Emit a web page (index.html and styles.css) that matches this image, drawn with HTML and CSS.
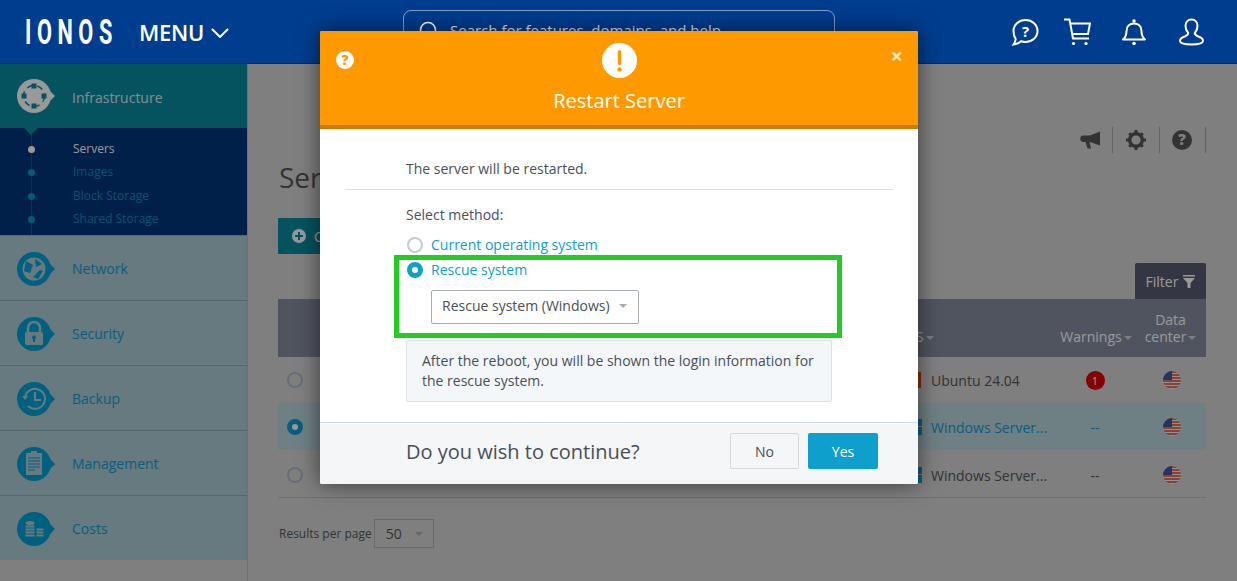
FILE: index.html
```html
<!DOCTYPE html>
<html lang="en">
<head>
<meta charset="utf-8">
<title>Restart Server</title>
<link rel="stylesheet" href="styles.css">
</head>
<body>
<header class="topbar">
  <div class="brand"><span class="logo">IONOS</span></div>
  <div class="menu">MENU
    <svg class="menu-chev" width="18" height="10" viewBox="0 0 18 10"><path d="M1 1l8 8 8-8" fill="none" stroke="#fff" stroke-width="2"/></svg>
  </div>
  <div class="search">
    <svg width="22" height="22" viewBox="0 0 22 22"><circle cx="10" cy="10" r="7.5" fill="none" stroke="#fff" stroke-width="1.6"/><path d="M15.500 15.500l5 5" stroke="#fff" stroke-width="1.6"/></svg>
    <span>Search for features, domains, and help</span>
  </div>
  <div class="top-icons">
    <svg class="ti-chat" width="28" height="28" viewBox="0 0 28 28"><path d="M14.500 2c6.800 0 12 4.900 12 11s-5.200 11-12 11c-1.600 0-3.100-.3-4.500-.8-1.900 1.700-4.300 3-7.500 3.300 1.300-1.800 2-3.500 2.200-5.500C3.300 18.900 2.500 16.100 2.500 13c0-6.100 5.200-11 12-11z" fill="none" stroke="#fff" stroke-width="2"/><text x="14.500" y="18.500" class="chat-q">?</text></svg>
    <svg width="28" height="28" viewBox="0 0 28 28"><path d="M1 1.500h5.500l3.500 19h16M7 5.500h20l-2 10.500H8.800" fill="none" stroke="#fff" stroke-width="2"/><circle cx="10.500" cy="25.500" r="1.600" fill="#fff"/><circle cx="23" cy="25.500" r="1.600" fill="#fff"/></svg>
    <svg class="ti-bell" width="26" height="28" viewBox="0 0 26 28"><path d="M2 21.500c2.500-2 3.500-4 3.500-8.500 0-4.500 3-7.500 7.500-7.500s7.500 3 7.500 7.500c0 4.500 1 6.500 3.500 8.500z" fill="none" stroke="#fff" stroke-width="2" stroke-linejoin="round"/><circle cx="13" cy="3" r="1.800" fill="#fff"/><circle cx="13" cy="25.500" r="1.800" fill="#fff"/></svg>
    <svg width="25" height="28" viewBox="0 0 25 28"><path d="M12.500 1.500c3.700 0 6 2.800 6 6.500 0 3-1.200 5.400-2.700 7 0 2 1 2.500 3.500 3.500 2.700 1 4.700 2.200 4.700 4.300 0 2.600-5 3.700-11.500 3.700S1 25.400 1 22.800c0-2.100 2-3.300 4.700-4.300 2.500-1 3.500-1.500 3.500-3.500-1.500-1.600-2.700-4-2.700-7 0-3.700 2.300-6.500 6-6.500z" fill="none" stroke="#fff" stroke-width="2"/></svg>
  </div>
</header>

<div class="page">
  <aside class="sidebar">
    <div class="nav-item nav-active">
      <svg class="nav-icon" width="38" height="34" viewBox="0 0 38 34"><path d="M33 12l5 5-5 5z" fill="#ffffff"/><circle cx="17" cy="17" r="17" fill="#ffffff"/><circle cx="17" cy="17" r="10.500" fill="none" stroke="#088a9e" stroke-width="1.500" stroke-dasharray="6 4.500"/><rect x="14.500" y="4.500" width="5" height="5" fill="#088a9e"/><rect x="14.500" y="24.500" width="5" height="5" fill="#088a9e"/><rect x="4.500" y="14.500" width="5" height="5" fill="#088a9e"/><rect x="24.500" y="14.500" width="5" height="5" fill="#088a9e"/></svg>
      <span>Infrastructure</span>
    </div>
    <ul class="subnav">
      <li class="sub-current">Servers</li>
      <li>Images</li>
      <li>Block Storage</li>
      <li>Shared Storage</li>
    </ul>
    <div class="nav-item">
      <svg class="nav-icon" width="38" height="34" viewBox="0 0 38 34"><path d="M33 12l5 5-5 5z" fill="#00a0d4"/><circle cx="17" cy="17" r="17" fill="#00a0d4"/><circle cx="17" cy="17" r="11.500" fill="#aacbd4"/><path d="M9 9l7 4-3 8-6-2zM18 7l7 5-6 3zM16 25l7-7 3 1-5 8zM8 22l4 5" fill="#00a0d4"/></svg>
      <span>Network</span>
    </div>
    <div class="nav-item">
      <svg class="nav-icon" width="38" height="34" viewBox="0 0 38 34"><path d="M33 12l5 5-5 5z" fill="#00a0d4"/><circle cx="17" cy="17" r="17" fill="#00a0d4"/><path d="M11 15v-4a6 6 0 0 1 12 0v4" fill="none" stroke="#aacbd4" stroke-width="2.500"/><rect x="8" y="15" width="18" height="13" rx="1.500" fill="#aacbd4"/><circle cx="17" cy="20.500" r="2" fill="#00a0d4"/><rect x="16" y="21" width="2" height="4" fill="#00a0d4"/></svg>
      <span>Security</span>
    </div>
    <div class="nav-item">
      <svg class="nav-icon" width="38" height="34" viewBox="0 0 38 34"><path d="M33 12l5 5-5 5z" fill="#00a0d4"/><circle cx="17" cy="17" r="17" fill="#00a0d4"/><path d="M8 17a10 10 0 1 1 3 7" fill="none" stroke="#aacbd4" stroke-width="2"/><path d="M5 14l3 4 3-4z" fill="#aacbd4"/><path d="M18 10v8h6" fill="none" stroke="#aacbd4" stroke-width="2"/></svg>
      <span>Backup</span>
    </div>
    <div class="nav-item">
      <svg class="nav-icon" width="38" height="34" viewBox="0 0 38 34"><path d="M33 12l5 5-5 5z" fill="#00a0d4"/><circle cx="17" cy="17" r="17" fill="#00a0d4"/><rect x="9" y="6" width="16" height="22" fill="#aacbd4"/><rect x="14" y="4" width="6" height="3" fill="#aacbd4"/><path d="M11 11h12M11 14h12M11 17h12M11 20h12M11 23h7" stroke="#00a0d4" stroke-width="1.200"/></svg>
      <span>Management</span>
    </div>
    <div class="nav-item">
      <svg class="nav-icon" width="38" height="34" viewBox="0 0 38 34"><path d="M33 12l5 5-5 5z" fill="#00a0d4"/><circle cx="17" cy="17" r="17" fill="#00a0d4"/><ellipse cx="13" cy="11" rx="4.500" ry="2" fill="#aacbd4"/><path d="M8.500 14.500h9M8.500 17.500h9M8.500 20.500h9M8.500 23.500h9M19.500 17.500h7M19.500 20.500h7M19.500 23.500h7" stroke="#aacbd4" stroke-width="2"/></svg>
      <span>Costs</span>
    </div>
  </aside>

  <main class="content">
    <div class="tools">
      <span class="tool">
        <svg width="21" height="19" viewBox="0 0 21 19"><path d="M20 .5v14L10 11H3.500a3.200 3.200 0 0 1 0-6.500H10z" fill="#555"/><path d="M5.500 11h4l1.500 6.500H7.500z" fill="#555"/></svg>
      </span>
      <span class="tool">
        <svg width="20" height="20" viewBox="0 0 20 20"><circle cx="10" cy="10" r="6.300" fill="none" stroke="#555" stroke-width="3.400"/><path d="M8.500 0h3v3h-3zM8.500 17h3v3h-3zM0 8.500h3v3H0zM17 8.500h3v3h-3zM2.200 4.300l2.100-2.100 2 2-2.100 2.100zM13.700 15.800l2.100-2.100 2 2-2.100 2.100zM15.700 2.200l2.100 2.100-2 2-2.100-2.100zM4.200 13.700l2.100 2.100-2 2-2.100-2.100z" fill="#555"/></svg>
      </span>
      <span class="tool">
        <svg width="20" height="20" viewBox="0 0 20 20"><circle cx="10" cy="10" r="10" fill="#555"/><text x="10" y="15" class="help-q help-q-tool">?</text></svg>
      </span>
    </div>
    <h1 class="title">Servers</h1>
    <button class="create" type="button">
      <svg width="14" height="14" viewBox="0 0 14 14"><circle cx="7" cy="7" r="7" fill="#fff"/><path d="M7 3v8M3 7h8" stroke="#088a9e" stroke-width="2"/></svg>
      Create
    </button>
    <div class="filter-wrap"><div class="filter">Filter
      <svg width="12" height="13" viewBox="0 0 12 13"><path d="M0 0h12v1.500H0zM0 3h12L7.500 8v5h-3V8z" fill="#fff"/></svg>
    </div></div>
    <div class="table">
      <div class="thead">
        <span></span><span></span>
        <span class="th th-os">OS<i class="caret"></i></span>
        <span class="th th-warn">Warnings<i class="caret"></i></span>
        <span class="th th-dc">Data<br>center<i class="caret"></i></span>
      </div>
      <div class="row">
        <span class="radio"></span><span></span>
        <span class="os"><i class="os-icon os-ubuntu"></i>Ubuntu 24.04</span>
        <span class="cell-c"><b class="badge">1</b></span>
        <span class="cell-c"><svg class="flag" width="18" height="18" viewBox="0 0 18 18"><use href="#us"/></svg></span>
      </div>
      <div class="row row-selected">
        <span class="radio radio-on"></span><span></span>
        <span class="os"><i class="os-icon os-win"></i>Windows Server...</span>
        <span class="cell-c">--</span>
        <span class="cell-c"><svg class="flag" width="18" height="18" viewBox="0 0 18 18"><use href="#us"/></svg></span>
      </div>
      <div class="row">
        <span class="radio"></span><span></span>
        <span class="os"><i class="os-icon os-win"></i>Windows Server...</span>
        <span class="cell-c">--</span>
        <span class="cell-c"><svg class="flag" width="18" height="18" viewBox="0 0 18 18"><use href="#us"/></svg></span>
      </div>
    </div>
    <div class="pager">Results per page
      <span class="pager-select">50<i class="caret caret-gray"></i></span>
    </div>
  </main>
</div>

<svg class="defs" width="0" height="0">
  <defs>
    <clipPath id="disc"><circle cx="9" cy="9" r="9"/></clipPath>
    <g id="us" clip-path="url(#disc)">
      <rect width="18" height="18" fill="#f4f4f4"/>
      <path d="M0 1h18M0 4h18M0 7h18M0 10h18M0 13h18M0 16h18" stroke="#d9402f" stroke-width="1.500"/>
      <rect width="9" height="9" fill="#3a5a9e"/>
    </g>
  </defs>
</svg>

<div class="overlay"></div>

<section class="modal">
  <div class="modal-head">
    <svg class="modal-help" width="18" height="18" viewBox="0 0 18 18"><circle cx="9" cy="9" r="9" fill="#fff"/><text x="9" y="14" class="help-q help-q-modal">?</text></svg>
    <span class="modal-close">×</span>
    <svg class="modal-alert" width="35" height="35" viewBox="0 0 35 35"><circle cx="17.500" cy="17.500" r="17.500" fill="#fff"/><rect x="15.800" y="7" width="3.400" height="15" rx="1.700" fill="#f90"/><circle cx="17.500" cy="26.500" r="2.200" fill="#f90"/></svg>
    <h2 class="modal-title">Restart Server</h2>
  </div>
  <div class="modal-body">
    <p class="lead">The server will be restarted.</p>
    <div class="method">
      <p class="method-label">Select method:</p>
      <label class="choice choice-plain"><span class="radio radio-modal"></span>Current operating system</label>
      <div class="highlight">
        <label class="choice"><span class="radio radio-modal radio-on-modal"></span>Rescue system</label>
        <div class="select">Rescue system (Windows)<i class="caret caret-gray"></i></div>
      </div>
      <div class="note">After the reboot, you will be shown the login information for the rescue system.</div>
    </div>
  </div>
  <div class="modal-foot">
    <span class="question">Do you wish to continue?</span>
    <div class="actions">
      <button class="btn btn-no" type="button">No</button>
      <button class="btn btn-yes" type="button">Yes</button>
    </div>
  </div>
</section>
</body>
</html>
```
FILE: styles.css
```css
* { box-sizing: border-box; }
html, body { margin: 0; height: 581px; overflow: hidden; }
body { font-family: "Open Sans", "Noto Sans", sans-serif; font-size: 14px; color: #555; background: #d4d4d4; position: relative; }
p, h1, h2, ul { margin: 0; padding: 0; }
i { font-style: normal; }
.defs { position: absolute; }

/* top bar */
.topbar { position: relative; z-index: 2; height: 64px; background: #003d8f; border-bottom: 1px solid #002a66; display: flex; align-items: center; color: #fff; }
.brand { width: 139px; padding-left: 25px; flex: none; }
.logo { display: inline-block; margin-top: 2px; font-family: "Roboto", sans-serif; font-weight: 700; font-size: 35px; line-height: 30px; letter-spacing: 9px; transform: scaleX(.62); transform-origin: left center; white-space: nowrap; }
.menu { width: 264px; flex: none; font-size: 22px; font-weight: 600; display: flex; align-items: center; gap: 7px; letter-spacing: -.3px; }
.menu-chev { margin-top: 3px; }
.search { width: 432px; height: 64px; margin-top: 20px; flex: none; border: 1px solid rgba(255,255,255,.5); border-radius: 8px; display: flex; align-items: flex-start; gap: 10px; padding: 9px 0 0 14px; font-size: 15px; color: #dfe6f0; }
.top-icons { margin-left: auto; padding-right: 33px; display: flex; align-items: center; gap: 30px; }
.ti-chat { margin-right: -6px; }
.ti-bell { margin-right: 2px; }
.chat-q { font-family: "Open Sans", sans-serif; font-size: 15px; font-weight: 700; fill: #fff; text-anchor: middle; }

/* page */
.page { display: flex; height: 517px; }
.sidebar { width: 248px; flex: none; border-right: 1px solid #b8bcc0; }
.nav-item { height: 65px; display: flex; align-items: center; background: #aacbd4; border-top: 1px solid #8eaab8; color: #129bcf; padding: 1px 0 0 17px; gap: 17px; }
.nav-icon { flex: none; }
.nav-active { height: 64px; background: #088a9e; color: #fff; border-top: 0; padding-top: 0; position: relative; }
.nav-active span { opacity: .85; margin-top: 3px; }
.nav-active::after { content: ""; position: absolute; left: 24px; top: 64px; border: 7px solid transparent; border-top-color: #088a9e; z-index: 1; border-bottom: 0; }
.subnav { list-style: none; height: 107px; background: #00347b; padding: 9px 0 0 73px; font-size: 12px; color: #0a8fb0; position: relative; }
.subnav::before { content: ""; position: absolute; left: 31px; top: 0; bottom: 0; width: 1px; background: #0a5a8f; }
.subnav li { height: 23.300px; line-height: 23.300px; position: relative; }
.subnav li::before { content: ""; position: absolute; left: -45px; top: 9px; width: 7px; height: 7px; border-radius: 50%; background: #0a9ab8; }
.subnav .sub-current { color: #fff; opacity: 1; }
.subnav .sub-current::before { background: #fff; }

/* content */
.content { flex: 1; padding: 63px 31px 0 30px; min-width: 0; }
.tools { display: flex; justify-content: flex-end; height: 26px; margin-bottom: 11px; }
.tool { width: 46.500px; height: 26px; border-right: 1px solid #a0a6b0; display: flex; align-items: center; justify-content: center; }
.tool:first-child { width: 44px; }
.title { font-size: 28px; font-weight: 400; line-height: 36px; color: #555; padding-left: 1px; margin-top: -5px; }
.create { margin-top: 23px; height: 36px; width: 110px; display: flex; align-items: center; gap: 8px; padding: 0 14px; background: #088a9e; border: 0; color: #fff; font: inherit; }
.filter-wrap { display: flex; justify-content: flex-end; margin-top: 9px; }
.filter { width: 71px; height: 36px; background: #575d70; color: #fff; display: flex; align-items: center; justify-content: center; gap: 5px; border-radius: 2px 2px 0 0; }
.thead, .row { display: grid; grid-template-columns: 34px 593px 150px 80px 71px; }
.thead { height: 58px; background: #858c9e; color: #fff; }
.th { align-self: end; padding-bottom: 12px; line-height: 17px; white-space: nowrap; }
.th-warn { text-align: center; padding-left: 2px; }
.th-dc { text-align: center; }
.caret { display: inline-block; margin-left: 2px; vertical-align: middle; border: 4px solid transparent; border-top-color: #fff; border-bottom: 0; opacity: .6; }
.caret-gray { border-top-color: #aaa; opacity: 1; }
.row { height: 47px; padding-top: 1px; align-items: center; }
.row:nth-child(2) { height: 46px; padding-top: 0; }
.row:last-child { border-bottom: 1px solid #b8bcc0; height: 48px; padding-top: 3px; }
.row-selected { background: #b9d5dc; color: #129bcf; }
.radio { display: block; width: 16px; height: 16px; border-radius: 50%; border: 2px solid #aeb8c6; justify-self: center; }
.radio-on { border: 5px solid #129bcf; background: #fff; }
.os { display: flex; align-items: center; gap: 10px; white-space: nowrap; }
.os-icon { width: 16px; height: 16px; flex: none; }
.os-ubuntu { background: #dd4814; }
.os-win { width: 17px; margin-right: -1px; background: linear-gradient(#129bcf 7px, #d4d4d4 7px, #d4d4d4 8px, #129bcf 8px); }
.cell-c { text-align: center; }
.badge { display: inline-block; width: 19px; height: 19px; line-height: 19px; border-radius: 50%; background: #e00000; color: #fff; font-size: 11px; font-weight: 400; }
.flag { display: block; margin: 0 auto; position: relative; left: 1px; }
.pager { margin-top: 21px; display: flex; align-items: center; gap: 2px; font-size: 12px; padding-left: 1px; }
.pager-select { width: 60px; height: 29px; border: 1px solid #b0b0b0; font-size: 14px; display: flex; align-items: center; justify-content: space-between; padding: 0 10px 0 11px; }

/* overlay + dialog */
.overlay { position: absolute; inset: 0; background: rgba(0,0,0,.4); z-index: 1; }
.modal { position: absolute; left: 320px; top: 31px; width: 598px; height: 453px; z-index: 3; background: #fff; display: flex; flex-direction: column; border-radius: 2px; box-shadow: 0 0 22px rgba(0,0,0,.55); }
.modal-head { height: 98px; flex: none; background: #f90; border-bottom: 4px solid #cc7a00; position: relative; color: #fff; display: flex; flex-direction: column; align-items: center; padding-top: 12px; border-radius: 2px 2px 0 0; }
.modal-help { position: absolute; left: 16px; top: 20px; }
.help-q { font-family: "Open Sans", sans-serif; font-weight: 800; text-anchor: middle; }
.help-q-tool { font-size: 15px; fill: #d4d4d4; }
.help-q-modal { font-size: 14px; fill: #f90; }
.modal-close { position: absolute; right: 15px; top: 9px; font-size: 22px; font-weight: 700; line-height: 30px; color: #ffe9c9; }
.modal-alert { flex: none; }
.modal-title { font-size: 20px; font-weight: 400; line-height: 24px; margin-top: 11px; }
.modal-body { flex: 1; padding: 0 25px; color: #4a4f57; }
.lead { height: 61px; padding: 29px 0 0 61px; line-height: 22px; border-bottom: 1px solid #dcdfe3; }
.method { padding-left: 61px; }
.method-label { line-height: 20px; margin-top: 15px; }
.choice { display: flex; align-items: center; gap: 8px; color: #0e9fcc; line-height: 20px; }
.choice-plain { margin-top: 10px; }
.radio-modal { margin-left: 1px; flex: none; border-color: #c3cbd6; }
.radio-on-modal { border: 5px solid #0e9fcc; background: #fff; }
.highlight { width: 448px; height: 83px; margin: 0 0 2px -12px; border: 5px solid #22cc22; padding: 0 0 0 7px; display: flex; flex-direction: column; }
.select { width: 208px; height: 34px; margin: 10px 0 0 25px; flex: none; border: 1px solid #a8adb3; border-radius: 2px; display: flex; align-items: center; gap: 7px; padding: 0 0 3px 10px; color: #4a4f57; }
.note { width: 426px; height: 62px; background: #f4f7fa; border: 1px solid #d9e0e6; border-radius: 2px; padding: 10px 15px; line-height: 20px; }
.modal-foot { height: 62px; flex: none; background: #f4f6f8; border-top: 1px solid #d5dde4; display: flex; align-items: center; padding: 0 40px 5px 86px; border-radius: 0 0 2px 2px; }
.question { font-size: 20px; color: #4a4f57; }
.actions { margin-left: auto; display: flex; gap: 9px; }
.btn { height: 36px; width: 69px; font: inherit; border-radius: 2px; }
.btn-no { background: #f4f6f8; border: 1px solid #d5d9de; color: #4a4f57; }
.btn-yes { width: 70px; background: #0e9fcc; border: 0; color: #fff; }
```
